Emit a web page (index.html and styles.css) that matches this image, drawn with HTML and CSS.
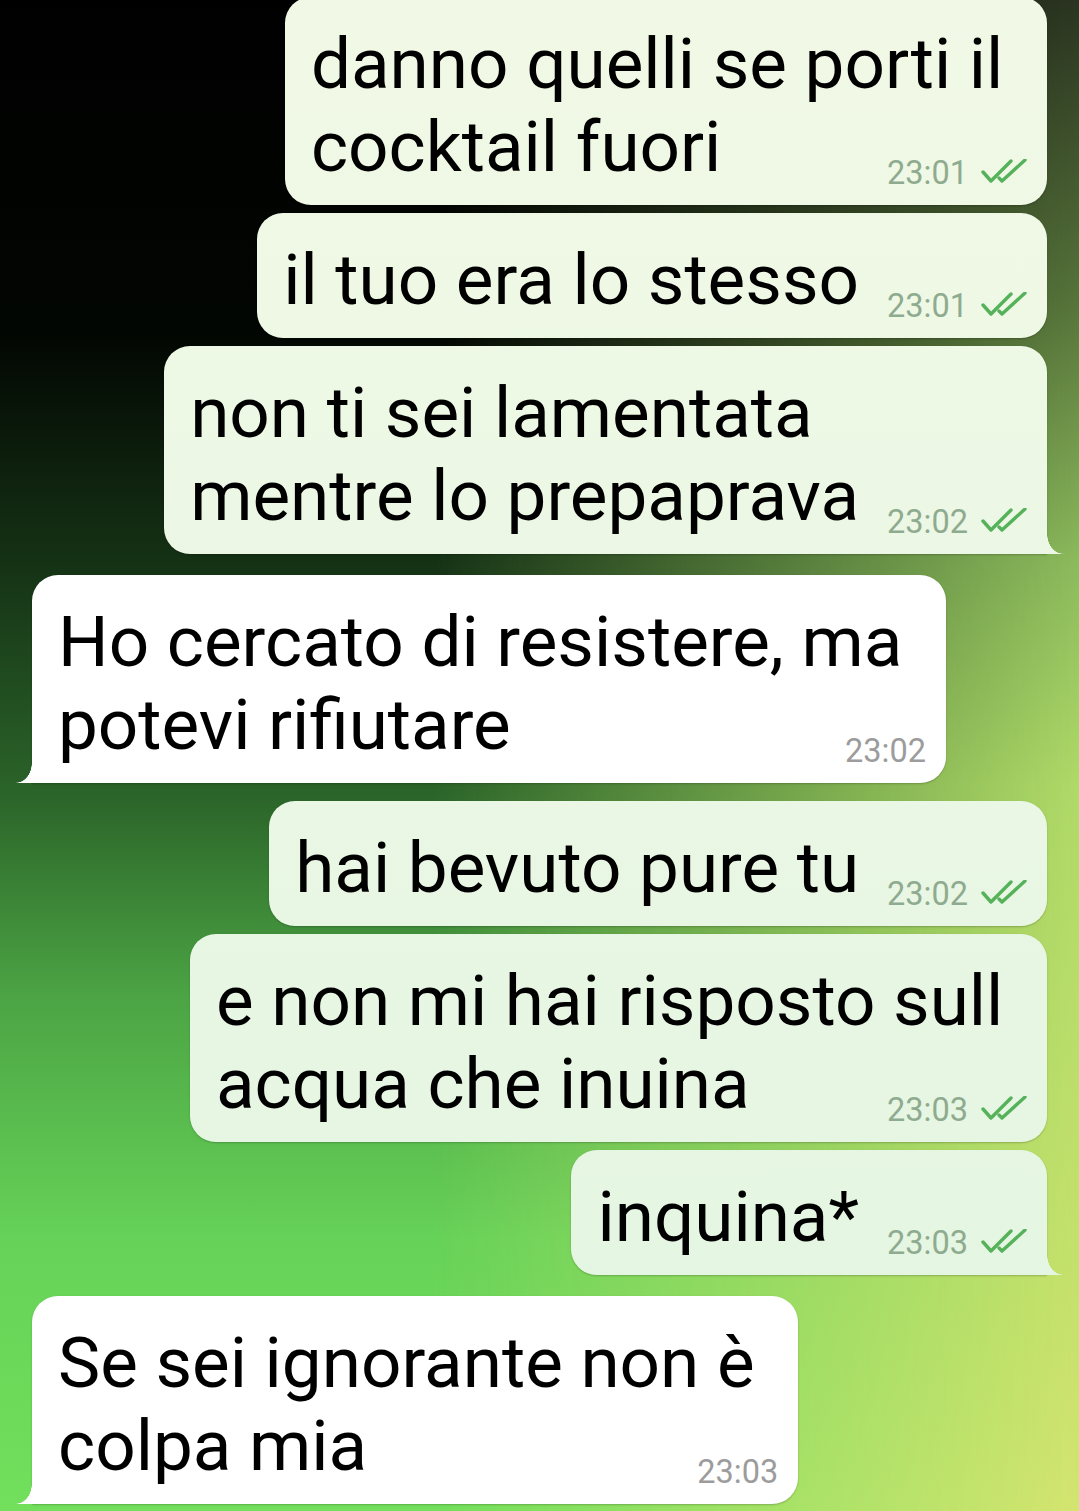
FILE: index.html
```html
<!DOCTYPE html>
<html lang="it">
<head>
    <meta charset="UTF-8">
    <meta name="viewport" content="width=device-width, initial-scale=1.0">
    <title>Chat</title>
    <link rel="stylesheet" href="styles.css">
</head>
<body>
    <div class="chat">
        <div class="group out">
            <div class="bubble">
                <div class="text">danno quelli se porti il&nbsp;</div>
                <div class="last">
                    <span>cocktail fuori</span>
                    <span class="meta"><span class="time">23:01</span><svg class="ticks" viewBox="0 0 46 25"><path d="M2 13 L10 22 L30 2"/><path d="M18 19 L21 22 L44 1"/></svg></span>
                </div>
            </div>
            <div class="bubble">
                <div class="last">
                    <span>il tuo era lo stesso</span>
                    <span class="meta"><span class="time">23:01</span><svg class="ticks" viewBox="0 0 46 25"><path d="M2 13 L10 22 L30 2"/><path d="M18 19 L21 22 L44 1"/></svg></span>
                </div>
            </div>
            <div class="bubble tail">
                <div class="text">non ti sei lamentata</div>
                <div class="last">
                    <span>mentre lo prepaprava</span>
                    <span class="meta"><span class="time">23:02</span><svg class="ticks" viewBox="0 0 46 25"><path d="M2 13 L10 22 L30 2"/><path d="M18 19 L21 22 L44 1"/></svg></span>
                </div>
            </div>
        </div>

        <div class="group in first-in">
            <div class="bubble tail">
                <div class="text">Ho cercato di resistere, ma&nbsp;</div>
                <div class="last">
                    <span>potevi rifiutare</span>
                    <span class="meta"><span class="time">23:02</span></span>
                </div>
            </div>
        </div>

        <div class="group out after-in">
            <div class="bubble">
                <div class="last">
                    <span>hai bevuto pure tu</span>
                    <span class="meta"><span class="time">23:02</span><svg class="ticks" viewBox="0 0 46 25"><path d="M2 13 L10 22 L30 2"/><path d="M18 19 L21 22 L44 1"/></svg></span>
                </div>
            </div>
            <div class="bubble">
                <div class="text">e non mi hai risposto sull&nbsp;</div>
                <div class="last">
                    <span>acqua che inuina</span>
                    <span class="meta"><span class="time">23:03</span><svg class="ticks" viewBox="0 0 46 25"><path d="M2 13 L10 22 L30 2"/><path d="M18 19 L21 22 L44 1"/></svg></span>
                </div>
            </div>
            <div class="bubble tail">
                <div class="last">
                    <span>inquina*</span>
                    <span class="meta"><span class="time">23:03</span><svg class="ticks" viewBox="0 0 46 25"><path d="M2 13 L10 22 L30 2"/><path d="M18 19 L21 22 L44 1"/></svg></span>
                </div>
            </div>
        </div>

        <div class="group in first-in">
            <div class="bubble tail">
                <div class="text">Se sei ignorante non è&nbsp;</div>
                <div class="last">
                    <span>colpa mia</span>
                    <span class="meta"><span class="time">23:03</span></span>
                </div>
            </div>
        </div>
    </div>
</body>
</html>
```

FILE: styles.css
```css
html, body {
    margin: 0;
    height: 1511px;
    overflow: hidden;
}

body {
    font-family: Roboto, "Noto Sans", sans-serif;
    color: #000000;
    background: linear-gradient(to bottom,
        #000000 0%,
        #020602 22%,
        #163416 38%,
        #2c662a 53%,
        #4ca444 66%,
        #66d258 82%,
        #72e05c 100%);
    position: relative;
}

/* right-hand wash of the wallpaper */
body::before {
    content: "";
    position: absolute;
    inset: 0;
    background: linear-gradient(to bottom,
        #2a3420 0%,
        #56743a 20%,
        #8cba5c 37%,
        #b0da68 52%,
        #c6e16c 85%,
        #d4e470 100%);
    -webkit-mask-image: linear-gradient(to right, transparent 40%, #000 100%);
    mask-image: linear-gradient(to right, transparent 40%, #000 100%);
}

.chat {
    position: relative;
    display: flex;
    flex-direction: column;
    padding: 0 32px;
    margin-top: -3px;
}

.group {
    display: flex;
    flex-direction: column;
    gap: 8px;
}

.group.out {
    align-items: flex-end;
}

.group.in {
    align-items: flex-start;
}

.first-in {
    margin-top: 21px;
}

.after-in {
    margin-top: 18px;
}

.bubble {
    position: relative;
    padding: 25px 20px 17px 26px;
    border-radius: 26px;
    font-size: 71px;
    line-height: 83px;
    box-shadow: 0 1px 2px rgba(0, 0, 0, 0.22);
    white-space: nowrap;
}

.out .bubble {
    background: linear-gradient(to bottom, #f1f9e6, #e2f5e2) fixed;
}

.in .bubble {
    background: #ffffff;
}

.text {
    padding-right: 6px;
}

.last {
    display: flex;
    justify-content: space-between;
    align-items: flex-end;
}

.meta {
    display: flex;
    align-items: flex-end;
    margin-left: 28px;
    font-size: 32.5px;
    line-height: 30px;
}

.out .time {
    color: #8fab8f;
}

.in .time {
    color: #9c9c9c;
}

.ticks {
    width: 46px;
    height: 25px;
    margin-left: 13px;
    margin-bottom: 4px;
    fill: none;
    stroke: #56b25a;
    stroke-width: 3.4;
    stroke-linecap: round;
    stroke-linejoin: round;
}

/* bubble tails */
.out .bubble.tail {
    border-bottom-right-radius: 0;
}

.in .bubble.tail {
    border-bottom-left-radius: 0;
}

.bubble.tail::after {
    content: "";
    position: absolute;
    bottom: 0;
    width: 16px;
    height: 20px;
    background: inherit;
}

.out .bubble.tail::after {
    right: -16px;
    -webkit-mask-image: radial-gradient(16px 20px at 100% 0, transparent 97%, #000 100%);
    mask-image: radial-gradient(16px 20px at 100% 0, transparent 97%, #000 100%);
}

.in .bubble.tail::after {
    left: -16px;
    -webkit-mask-image: radial-gradient(16px 20px at 0 0, transparent 97%, #000 100%);
    mask-image: radial-gradient(16px 20px at 0 0, transparent 97%, #000 100%);
}
```
